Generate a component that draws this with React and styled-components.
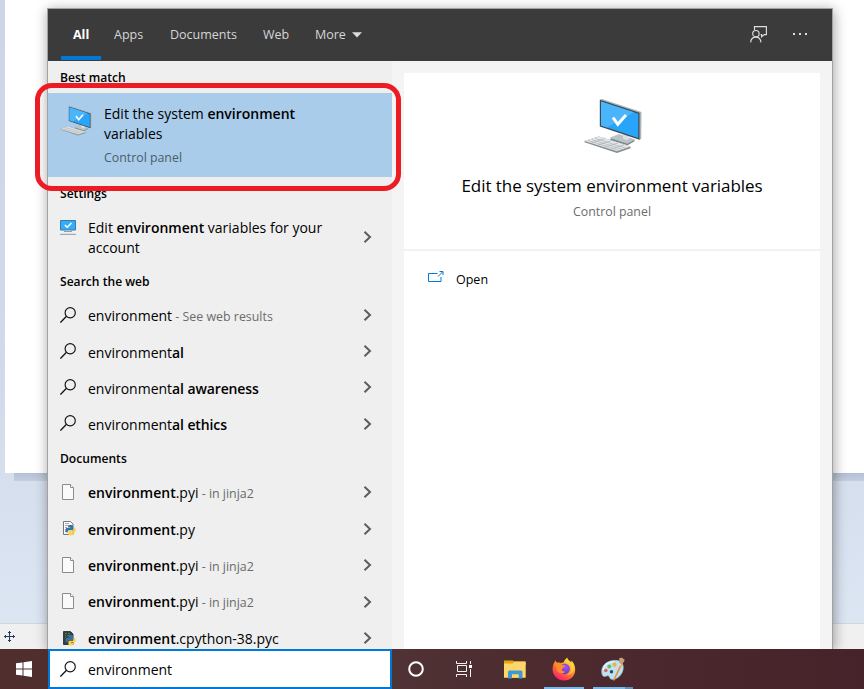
import React from 'react';
import styled, { createGlobalStyle, css } from 'styled-components';

const GlobalStyle = createGlobalStyle`
  * { box-sizing: border-box; }
  html, body { margin: 0; padding: 0; overflow: hidden; }
  body { font-family: "Open Sans", "Noto Sans", sans-serif; color: #000; }
  svg { display: block; flex: none; }
`;

const Screen = styled.div`
  position: relative;
  width: 864px;
  height: 689px;
  overflow: hidden;
  display: flex;
  flex-direction: column;
`;

/* Paint window behind the search flyout */
const Workspace = styled.div`
  height: 623px;
  flex: none;
  padding-left: 5px;
  background: linear-gradient(#ccd6e7, #d1daea 60%, #dce6f3);
`;

const Canvas = styled.div`
  height: 473px;
  background: #fff;
`;

const CanvasShadow = styled.div`
  height: 8px;
  margin-left: 9px;
  background: linear-gradient(#b3bfd3, #c3cedf);
`;

const StatusBar = styled.div`
  height: 26px;
  flex: none;
  display: flex;
  align-items: center;
  padding-left: 4px;
  background: #f0f0f0;
  border-top: 1px solid #d4d6da;
`;

/* Search flyout */
const Flyout = styled.section`
  position: absolute;
  left: 47px;
  top: 8px;
  width: 786px;
  height: 641px;
  border: 1px solid #a2a2a2;
  border-bottom: 0;
  display: flex;
  flex-direction: column;
  background: #f4f4f4;
  box-shadow: 1px 2px 12px rgba(0, 0, 0, 0.38);
  clip-path: inset(-8px -24px 0 -24px);
`;

const TabBar = styled.header`
  height: 52px;
  flex: none;
  display: flex;
  align-items: stretch;
  padding: 0 24px 0 13px;
  background: #3b3b3b;
`;

const Tab = styled.div`
  display: flex;
  align-items: center;
  gap: 6px;
  width: ${(p) => p.$width}px;
  padding: 0 0 0 13px;
  font-size: 12.5px;
  line-height: 18px;
  color: #d6d6d6;
  border-top: 4px solid transparent;
  border-bottom: 5px solid transparent;
  ${(p) => p.$active && css`
    padding-left: 12px;
    font-weight: 700;
    color: #fff;
    border-bottom-color: #0078d7;
    background-clip: padding-box;
    height: 51px;
    border-bottom-width: 4px;
  `}
`;

const TabActions = styled.div`
  margin-left: auto;
  display: flex;
  align-items: center;
  gap: 25px;
  padding-bottom: 2px;
`;

const Body = styled.div`
  flex: 1;
  min-height: 0;
  display: flex;
`;

const Results = styled.div`
  width: 344px;
  flex: none;
  overflow: hidden;
  background: #efefef;
`;

const GroupTitle = styled.h2`
  height: 32px;
  margin: 0;
  padding: 1px 0 0 12px;
  font-size: 12.1px;
  font-weight: 600;
  line-height: 32px;
`;

const BestMatch = styled.div`
  height: 84px;
  display: flex;
  gap: 12px;
  padding: 11px 12px 0;
  background: #a9ccea;
  svg { margin-top: 2px; }
`;

const BestText = styled.div`
  width: 220px;
  font-size: 14px;
  line-height: 20px;
  b { font-weight: 600; }
`;

const BestKind = styled.div`
  margin-top: 4px;
  font-size: 12.35px;
  line-height: 19px;
  color: #4b5c6b;
`;

const Row = styled.div`
  height: ${(p) => p.$height || 36.4}px;
  display: flex;
  align-items: center;
  gap: 12px;
  padding: 0 20px 0 12px;
`;

const RowIcon = styled.span`
  width: 16px;
  height: 16px;
  flex: none;
  align-self: ${(p) => (p.$top ? 'flex-start' : 'center')};
  margin-top: ${(p) => (p.$top ? 11 : -1)}px;
`;

const RowText = styled.div`
  width: 260px;
  margin-right: auto;
  font-size: 14px;
  line-height: 20px;
  padding-top: ${(p) => (p.$twoLine ? 1 : 2.6)}px;
  white-space: nowrap;
  b { font-weight: 600; }
`;

const Hint = styled.span`
  font-size: 12.4px;
  color: #6b6b6b;
`;

const Tail = styled.b`
  letter-spacing: -0.12px;
`;

const Details = styled.div`
  width: 416px;
  margin: 12px 12px 0;
  display: flex;
  flex-direction: column;
  background: #fff;
`;

const Hero = styled.div`
  height: 178px;
  flex: none;
  display: flex;
  flex-direction: column;
  align-items: center;
  padding: 26px 0 0 0;
  border-bottom: 2px solid #f2f2f2;
  svg { margin-left: 2px; }
`;

const HeroTitle = styled.div`
  margin-top: 20px;
  font-size: 17px;
  line-height: 24px;
  letter-spacing: -0.05px;
`;

const HeroKind = styled.div`
  margin-top: 5px;
  font-size: 12.35px;
  line-height: 18px;
  color: #6c6c6c;
`;

const OpenAction = styled.div`
  display: flex;
  align-items: center;
  gap: 12px;
  padding: 19px 24px;
  font-size: 12.5px;
  line-height: 20px;
`;

const OpenIcon = styled.span`
  height: 18px;
`;

/* Taskbar */
const Taskbar = styled.footer`
  height: 40px;
  flex: none;
  display: flex;
  background: linear-gradient(90deg, #502e2d 0, #503334 45%, #4c2a2e 65%, #46232a 100%);
`;

const StartButton = styled.div`
  width: 48px;
  display: flex;
  align-items: center;
  justify-content: center;
`;

const SearchField = styled.div`
  width: 344px;
  display: flex;
  align-items: center;
  gap: 12px;
  padding: 0 10px;
  border: 2px solid #0078d7;
  background: #fff;
  font-size: 14px;
  line-height: 20px;
`;

const SearchValue = styled.span`
  padding-top: 2px;
`;

const TaskButton = styled.div`
  width: ${(p) => p.$width || 48}px;
  display: flex;
  align-items: center;
  justify-content: center;
`;

const RunningButton = styled.div`
  width: 40px;
  margin-left: ${(p) => p.$gap}px;
  display: flex;
  align-items: center;
  justify-content: center;
  border-top: 2px solid transparent;
  border-bottom: 2px solid #76b9ed;
  ${(p) => p.$multiple && css`
    border-bottom: 2px solid;
    border-image: linear-gradient(90deg, #76b9ed 31px, #5f8fb5 31px) 1;
    border-image-width: 0 0 2px 0;
  `}
`;

/* Red marker drawn over the best match */
const Marker = styled.div`
  position: absolute;
  left: 35px;
  top: 83px;
  width: 366px;
  height: 108px;
  border: 5px solid #ed1c24;
  border-radius: 17px;
`;

const Chevron = () => (
  <svg width="9" height="14" viewBox="0 0 9 14">
    <path d="M1.500 1.800 7 7l-5.500 5.200" fill="none" stroke="#5d5d5d" strokeWidth="2" />
  </svg>
);

const SearchIcon = () => (
  <svg width="16" height="16" viewBox="0 0 16 16">
    <circle cx="10.200" cy="5.700" r="5.100" fill="none" stroke="#111" strokeWidth="1.150" />
    <path d="M6.500 9.300.4 15.600" fill="none" stroke="#111" strokeWidth="1.250" />
  </svg>
);

const FileIcon = () => (
  <svg width="16" height="16" viewBox="0 0 16 16">
    <path d="M2.500.5h8l3 3v12h-11z" fill="#fafafa" stroke="#8b8b8b" />
    <path d="M10.500.5v3h3" fill="#fff" stroke="#8b8b8b" />
  </svg>
);

const PythonIcon = ({ compiled }) => (
  <svg width="16" height="16" viewBox="0 0 16 16">
    <path d="M3.500 1.500h7l2.500 2.500v10.500h-9.500z" fill={compiled ? '#3a3d3e' : '#fafafa'} stroke={compiled ? '#3a3d3e' : '#777'} />
    <path
      d={compiled ? 'M5 3.500h2m1 0h2M5 5.500h1m1 0h2M5 7.500h1' : 'M5 3.500h4M5 5.500h5M5 7.500h2M5 9.500h1M5 11.500h1'}
      stroke={compiled ? '#3a8a50' : '#aaa'}
      fill="none"
    />
    <path d="M8.200 6c0-1.400 5-1.400 5 .2v2.600c0 1-.6 1.500-1.600 1.500H9.200c-1 0-1.500.7-1.500 2.200H6.900c-1.900 0-1.900-4.500 0-4.800h3.300v-.5h-2z" fill="#3673a5" />
    <path d="M13.700 7.800h.5c2 0 2 4.400 0 4.700h-3.200v.5h2.200v1.300c0 1.500-4.800 1.500-4.800 0v-2c0-1 .5-1.500 1.400-1.500h2.400c.9 0 1.500-.6 1.500-1.500z" fill="#fcd33e" />
  </svg>
);

const ScreenIcon = () => (
  <svg width="16" height="16" viewBox="0 0 16 16">
    <path d="M.5.500h15v9.500H.5z" fill="#36adf6" stroke="#357da9" />
    <path d="m4.800 5 2.400 2.300L11.500 3" fill="none" stroke="#fff" strokeWidth="1.500" />
    <path d="M6 10.500h4V12H6z" fill="#c4ccd1" />
    <path d="M4 11.500h8" stroke="#929da5" />
    <path d="M0 14.500h16" stroke="#8fa0ac" />
    <path d="M1 13.700h14" stroke="#d7dde1" />
  </svg>
);

const ComputerIcon = ({ width, height }) => (
  <svg width={width} height={height} viewBox="0 0 58 55">
    <path d="M26 38.500 35 35l16 5.500-7 4.800-17-5.200z" fill="#b9c3c8" />
    <path d="m27 39.500 16.500 5.200 7-4v1.500l-7 4L26 41z" fill="#798388" />
    <path d="M39 35h6v5l-3 1-3-1.500z" fill="#dce0e3" />
    <path d="m16 .5 2-.5 39.500 13-.3 27-1.700.7z" fill="#a9b3b9" />
    <path d="m15.800.8 39.700 13v26.900L15.800 27.500z" fill="#374a56" />
    <path d="m17 2.500 37.300 12.200v24.200L17 26.500z" fill="#28a5f8" />
    <path d="m17 2.500 33 10.800L23 28.500l-6-2z" fill="#4bb5fb" />
    <path d="m29 18.500 4.800 6.800L42 16" fill="none" stroke="#fff" strokeWidth="3" />
    <path d="M.5 42 15 37.500l31.500 10v1.800L33 54 .5 43.300z" fill="#858d92" />
    <path d="M.5 42 15 37.500l31.500 10L33 52.300z" fill="#e4e7e9" />
    <path d="m4 41.500 31.500 10M7.500 40.500l31.500 10M11 39.300l31 10M7 44l14-4.500M13.500 46l14-4.300M20 48.200 34 44M26.500 50.300l14-4.500" fill="none" stroke="#a9b0b4" strokeWidth=".7" />
  </svg>
);

const FeedbackIcon = () => (
  <svg width="17" height="17" viewBox="0 0 17 17">
    <g fill="none" stroke="#dedede" strokeWidth="1.150">
      <path d="M4.500 4V.6h11.900v8h-2.200l-2.600 2.200V8.600h-1" />
      <circle cx="5.900" cy="7.700" r="3.200" />
      <path d="M.6 16.400c.3-3.200 2.300-5.300 5.200-5.300s4.900 2.100 5.200 5.300" />
    </g>
  </svg>
);

const MoreDots = () => (
  <svg width="16" height="4" viewBox="0 0 16 4">
    <path d="M1 1h2v2H1zM7 1h2v2H7zM13 1h2v2h-2z" fill="#dedede" />
  </svg>
);

const CaretDown = () => (
  <svg width="10" height="6" viewBox="0 0 10 6">
    <path d="M0 .3h10L5 5.500z" fill="#dcdcdc" />
  </svg>
);

const LaunchIcon = () => (
  <svg width="16" height="13" viewBox="0 0 16 13">
    <path d="M9.500 2.500h-9v8h12.500V6" fill="none" stroke="#0078d7" />
    <path d="m10 5.500 4.500-4.500M11.500.5h3.500V4" fill="none" stroke="#0078d7" />
  </svg>
);

const MoveIcon = () => (
  <svg width="11" height="11" viewBox="0 0 11 11">
    <path d="M5.500 0v11M0 5.500h11M4 1.500h3M4 9.500h3M1.500 4v3M9.500 4v3" fill="none" stroke="#243b63" />
  </svg>
);

const WindowsIcon = () => (
  <svg width="16" height="16" viewBox="0 0 16 16">
    <path d="M0 2.300 6.500 1.400v6.100H0zM7.500 1.200 16 0v7.500H7.500zM0 8.500h6.500v6.100L0 13.700zM7.500 8.500H16V16l-8.500-1.200z" fill="#fff" />
  </svg>
);

const CortanaIcon = () => (
  <svg width="16" height="16" viewBox="0 0 16 16">
    <circle cx="8" cy="8" r="6.800" fill="none" stroke="#fff" strokeWidth="2" />
  </svg>
);

const TaskViewIcon = () => (
  <svg width="16" height="16" viewBox="0 0 16 16">
    <path d="M.5 0v2.500h10V0M.5 16v-2.500h10V16M1.500 4.500h9v6h-9zM14.500 0v3M14.500 8v8" fill="none" stroke="#f2f2f2" />
    <path d="M13 4h3v3h-3z" fill="#fff" />
  </svg>
);

const ExplorerIcon = () => (
  <svg width="22" height="19" viewBox="0 0 22 19">
    <path d="M0 .5h9l1 1h11.500V5H0z" fill="#e5a50c" />
    <path d="M10 1.500h11.500V4H9z" fill="#fbd367" />
    <path d="M0 3.500h8.500l1.500-1h11.700v15.300H0z" fill="#fed669" />
    <path d="M4 18.500v-6.500q0-1.500 1.500-1.500H17q1.500 0 1.500 1.500v6.500h-4v-4H8v4z" fill="#3f97d8" />
    <path d="M8 14.500h6.500v3.300H8z" fill="#fed669" />
  </svg>
);

const FirefoxIcon = () => (
  <svg width="24" height="24" viewBox="0 0 24 24">
    <defs>
      <linearGradient id="ffBody" x1=".85" y1="0" x2=".25" y2="1">
        <stop offset="0" stopColor="#fff44f" />
        <stop offset=".35" stopColor="#ffb52b" />
        <stop offset=".62" stopColor="#ff6a34" />
        <stop offset="1" stopColor="#f5157a" />
      </linearGradient>
      <radialGradient id="ffGlobe" cx=".6" cy=".3" r=".8">
        <stop offset="0" stopColor="#a351f5" />
        <stop offset="1" stopColor="#5d38c6" />
      </radialGradient>
    </defs>
    <path d="M2 6 3.500 3.500l1.300 2.300L8.500 6 11.500 5.500C12 3.500 14 1.500 15.200.5c.2 2.500 2.500 3.500 4 5.500l.3-2.500C22 6 23.200 9 23.200 12.500 23.200 19 18.500 23.500 12 23.500S.6 18.500.6 12.500C.6 9.500 1.200 7.500 2 6z" fill="url(#ffBody)" />
    <circle cx="12.500" cy="11.800" r="5.400" fill="url(#ffGlobe)" />
    <path d="M3.500 6.500C7 4.500 10 6 10.500 8l2.500.8c0 1.500-2 1.800-3 3.200-.7 1.500.8 3 3.500 2.500-2.500 3.500-8.500 2-9-3z" fill="#ff8b2c" />
    <path d="M15 1.500c.5 3 3.700 4.500 4.300 8 .6 4-1.300 7-4.300 8.500 7-.5 8-8 4.600-12.500z" fill="#ffd83e" opacity=".8" />
  </svg>
);

const PaintIcon = () => (
  <svg width="24" height="24" viewBox="0 0 24 24">
    <path d="M12 3.500C4 4.500 0 10 .8 16c.4 3.300 2.200 4 4 3.200 2-1 3.400-.5 3.800 1.300.6 2.500 4.900 2.500 8.400 0 4-2.800 6-8 5-12C21.300 5 17.500 2.800 12 3.500z" fill="#bfe1f2" stroke="#8fbcd5" strokeWidth=".7" />
    <path d="M13 4.800C6 5 3 8.500 2 13" fill="none" stroke="#e6f5fb" strokeWidth="1.500" />
    <circle cx="4.800" cy="13.500" r="1.800" fill="#e1625a" />
    <circle cx="8.300" cy="9.500" r="1.900" fill="#6bb95c" />
    <circle cx="13.500" cy="7.700" r="2.100" fill="#f2b13b" />
    <circle cx="10.500" cy="14.700" r="1.700" fill="#274863" />
    <path d="m20.500 5 1.500 1-8.500 17.500-1.300.2.300-1.700z" fill="#e8943c" />
    <path d="M18.200 1.200 20.500.5l3.200 2.200-.8 2.400-2.700 2.400-1.800-1.500z" fill="#c99e76" />
    <path d="m18.300 6 2 1.500-1.300 2-1.500-1.200z" fill="#e9d9c6" />
  </svg>
);

const WEB = [
  { hint: ' - See web results' },
  { tail: 'al' },
  { tail: 'al awareness' },
  { tail: 'al ethics' },
];

const DOCS = [
  { ext: '.pyi', hint: ' - in jinja2', icon: <FileIcon /> },
  { ext: '.py', icon: <PythonIcon /> },
  { ext: '.pyi', hint: ' - in jinja2', icon: <FileIcon /> },
  { ext: '.pyi', hint: ' - in jinja2', icon: <FileIcon /> },
  { ext: '.cpython-38.pyc', icon: <PythonIcon compiled /> },
];

export default function App() {
  return (
    <>
      <GlobalStyle />
      <Screen>
        <Workspace>
          <Canvas />
          <CanvasShadow />
        </Workspace>
        <StatusBar><MoveIcon /></StatusBar>
        <Taskbar>
          <StartButton><WindowsIcon /></StartButton>
          <SearchField><SearchIcon /><SearchValue>environment</SearchValue></SearchField>
          <TaskButton><CortanaIcon /></TaskButton>
          <TaskButton><TaskViewIcon /></TaskButton>
          <TaskButton $width={54}><ExplorerIcon /></TaskButton>
          <RunningButton $gap={2}><FirefoxIcon /></RunningButton>
          <RunningButton $gap={9} $multiple><PaintIcon /></RunningButton>
        </Taskbar>

        <Flyout>
          <TabBar>
            <Tab $active $width={40}>All</Tab>
            <Tab $width={56}>Apps</Tab>
            <Tab $width={93}>Documents</Tab>
            <Tab $width={52}>Web</Tab>
            <Tab $width={80}>More <CaretDown /></Tab>
            <TabActions>
              <FeedbackIcon />
              <MoreDots />
            </TabActions>
          </TabBar>
          <Body>
            <Results>
              <GroupTitle>Best match</GroupTitle>
              <BestMatch>
                <ComputerIcon width={32} height={30} />
                <BestText>
                  Edit the system <b>environment</b><br />variables
                  <BestKind>Control panel</BestKind>
                </BestText>
              </BestMatch>
              <GroupTitle>Settings</GroupTitle>
              <Row $height={56}>
                <RowIcon $top><ScreenIcon /></RowIcon>
                <RowText $twoLine>Edit <b>environment</b> variables for your<br />account</RowText>
                <Chevron />
              </Row>
              <GroupTitle>Search the web</GroupTitle>
              {WEB.map((w, i) => (
                <Row key={i} $height={36.2}>
                  <RowIcon><SearchIcon /></RowIcon>
                  <RowText>
                    environment{w.tail && <Tail>{w.tail}</Tail>}
                    {w.hint && <Hint>{w.hint}</Hint>}
                  </RowText>
                  <Chevron />
                </Row>
              ))}
              <GroupTitle>Documents</GroupTitle>
              {DOCS.map((d, i) => (
                <Row key={i} $height={36.5}>
                  <RowIcon>{d.icon}</RowIcon>
                  <RowText>
                    <b>environment</b>{d.ext}
                    {d.hint && <Hint>{d.hint}</Hint>}
                  </RowText>
                  <Chevron />
                </Row>
              ))}
            </Results>
            <Details>
              <Hero>
                <ComputerIcon width={58} height={55} />
                <HeroTitle>Edit the system environment variables</HeroTitle>
                <HeroKind>Control panel</HeroKind>
              </Hero>
              <OpenAction>
                <OpenIcon><LaunchIcon /></OpenIcon>
                Open
              </OpenAction>
            </Details>
          </Body>
        </Flyout>
        <Marker />
      </Screen>
    </>
  );
}
